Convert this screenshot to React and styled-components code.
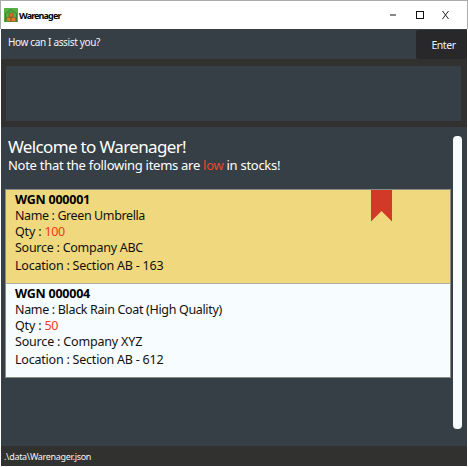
import React from 'react';
import styled, { createGlobalStyle } from 'styled-components';

const GlobalStyle = createGlobalStyle`
  * { box-sizing: border-box; }
  body { margin: 0; background: #fff; font-family: "Noto Sans", "Open Sans", sans-serif; }
`;

const Window = styled.div`
  width: 468px;
  height: 467px;
  display: flex;
  flex-direction: column;
  padding: 0 1px;
  background: #fff;
`;

const TitleBar = styled.header`
  height: 29px;
  margin: 0 -1px;
  padding: 0 16px 0 3px;
  display: flex;
  align-items: center;
  border: 1px solid #acacac;
  border-bottom: 0;
  background: #fff;
`;

const AppTitle = styled.h1`
  flex: 1;
  margin: 1px 0 0 1px;
  font-size: 9px;
  font-weight: 700;
  letter-spacing: -0.88px;
  line-height: 14px;
  color: #000;
`;

const WindowControls = styled.div`
  display: flex;
  align-items: center;
  gap: 16px;
`;

const CommandBar = styled.div`
  height: 30px;
  display: flex;
  justify-content: space-between;
  background: #373f46;
`;

const Prompt = styled.div`
  padding: 6px 7px;
  font-size: 10px;
  letter-spacing: -0.35px;
  line-height: 15px;
  color: #f4f4f4;
`;

const EnterButton = styled.button`
  width: 51px;
  height: 29px;
  margin-top: 1px;
  padding: 1px 0 0 4px;
  border: 0;
  border-radius: 2px;
  background: #28282a;
  font: 400 10.5px "Noto Sans", sans-serif;
  letter-spacing: -0.45px;
  color: #f0f0f0;
`;

const ResponseArea = styled.section`
  height: 68px;
  display: flex;
  padding: 7px 6px 6px 5px;
  background: #31312f;
`;

const ResponseBox = styled.div`
  flex: 1;
  background: #373f46;
`;

const Content = styled.main`
  height: 319px;
  display: flex;
  justify-content: space-between;
  padding-right: 5px;
  background: #373f46;
`;

const Main = styled.div`
  width: 450px;
`;

const Heading = styled.h2`
  margin: 9px 0 0 7px;
  font-size: 17px;
  font-weight: 400;
  letter-spacing: -0.65px;
  line-height: 22px;
  color: #fff;
`;

const Notice = styled.p`
  margin: -1px 0 0 7px;
  font-size: 13px;
  letter-spacing: -0.28px;
  line-height: 16px;
  color: #fff;
`;

const Low = styled.span`
  color: #e8472b;
`;

const ItemList = styled.div`
  width: 446px;
  margin: 16px 0 0 4px;
  border: 1px solid #8b8c86;
`;

const ItemCard = styled.article`
  position: relative;
  height: ${({ $height }) => $height}px;
  padding: 2px 9px 0;
  background: ${({ $marked }) => ($marked ? '#f0d87e' : '#f7fcff')};
  color: #111;

  & + & {
    border-top: 1px solid #b0afa5;
  }
`;

const ItemCode = styled.h3`
  margin: 0;
  font-size: 12.5px;
  font-weight: 700;
  letter-spacing: -0.23px;
  line-height: 16px;
  color: #000;
`;

const Field = styled.div`
  font-size: 12.5px;
  letter-spacing: ${({ $tracking }) => $tracking}px;
  line-height: 16px;
  white-space: nowrap;

  &:last-of-type {
    margin-top: 2px;
  }
`;

const Quantity = styled.span`
  letter-spacing: -0.4px;
  color: #f4391c;
`;

const Bookmark = styled.svg`
  position: absolute;
  top: 0;
  right: 58px;
  display: block;
`;

const ScrollThumb = styled.div`
  width: 9px;
  height: 293px;
  margin-top: 9px;
  border-radius: 4px;
  background: #f7fcff;
`;

const StatusBar = styled.footer`
  height: 20px;
  padding: 3px;
  background: #31312f;
  font-size: 9px;
  letter-spacing: -0.3px;
  line-height: 15px;
  color: #f4f4f4;
`;

function WarehouseIcon() {
  return (
    <svg width="14" height="14" viewBox="0 0 14 14">
      <rect width="14" height="14" rx="0.5" fill="#54b043" />
      <path d="M1.5 14V5.5L7 1.5l5.500 4V14" fill="none" stroke="#397a34" strokeWidth="0.9" />
      <rect x="5" y="5" width="4" height="4" fill="#d96c29" stroke="#75541f" strokeWidth="0.5" />
      <rect x="2.800" y="9.300" width="4" height="4" fill="#ed7830" stroke="#75541f" strokeWidth="0.5" />
      <rect x="7.300" y="9.300" width="4" height="4" fill="#ed7830" stroke="#75541f" strokeWidth="0.5" />
    </svg>
  );
}

function MinimizeIcon() {
  return (
    <svg width="10" height="10" viewBox="0 0 10 10">
      <path d="M1 5h6" stroke="#88888b" strokeWidth="2" />
    </svg>
  );
}

function MaximizeIcon() {
  return (
    <svg width="10" height="10" viewBox="0 0 10 10">
      <rect x="1.5" y="1.5" width="7" height="7" fill="none" stroke="#111" />
    </svg>
  );
}

function CloseIcon() {
  return (
    <svg width="10" height="10" viewBox="0 0 10 10">
      <path d="M1.500 1l6 8M7.500 1L1.500 9" fill="none" stroke="#222" />
    </svg>
  );
}

const items = [
  {
    code: 'WGN 000001', name: 'Green Umbrella', qty: 100, source: 'Company ABC', location: 'Section AB - 163',
    marked: true, height: 93, nameTracking: -0.39, sourceTracking: -0.26,
  },
  {
    code: 'WGN 000004', name: 'Black Rain Coat (High Quality)', qty: 50, source: 'Company XYZ', location: 'Section AB - 612',
    marked: false, height: 94, nameTracking: -0.33, sourceTracking: -0.18,
  },
];

export default function App() {
  return (
    <>
      <GlobalStyle />
      <Window>
        <TitleBar>
          <WarehouseIcon />
          <AppTitle>Warenager</AppTitle>
          <WindowControls>
            <MinimizeIcon />
            <MaximizeIcon />
            <CloseIcon />
          </WindowControls>
        </TitleBar>
        <CommandBar>
          <Prompt>How can I assist you?</Prompt>
          <EnterButton>Enter</EnterButton>
        </CommandBar>
        <ResponseArea>
          <ResponseBox />
        </ResponseArea>
        <Content>
          <Main>
            <Heading>Welcome to Warenager!</Heading>
            <Notice>Note that the following items are <Low>low</Low> in stocks!</Notice>
            <ItemList>
              {items.map((item) => (
                <ItemCard key={item.code} $marked={item.marked} $height={item.height}>
                  {item.marked && (
                    <Bookmark width="21" height="32" viewBox="0 0 21 32">
                      <path d="M0 0h21v31.5L10.5 21 0 31.5z" fill="#d03a27" />
                    </Bookmark>
                  )}
                  <ItemCode>{item.code}</ItemCode>
                  <Field $tracking={item.nameTracking}>Name : {item.name}</Field>
                  <Field $tracking={-0.18}>Qty : <Quantity>{item.qty}</Quantity></Field>
                  <Field $tracking={item.sourceTracking}>Source : {item.source}</Field>
                  <Field $tracking={-0.22}>Location : {item.location}</Field>
                </ItemCard>
              ))}
            </ItemList>
          </Main>
          <ScrollThumb />
        </Content>
        <StatusBar>.\data\Warenager.json</StatusBar>
      </Window>
    </>
  );
}
